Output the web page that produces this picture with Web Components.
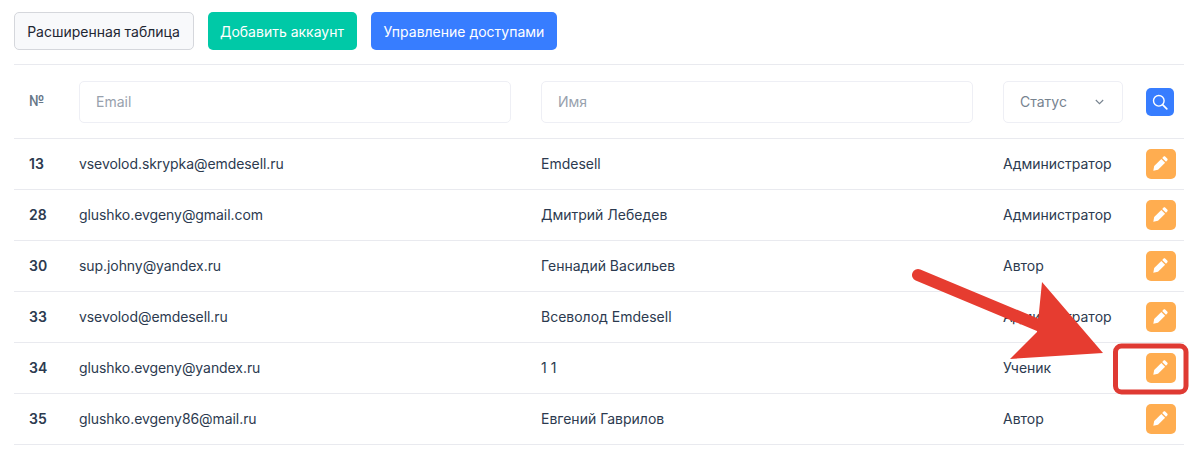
<!DOCTYPE html>
<html lang="ru">
<head>
<meta charset="utf-8">
<title>Аккаунты</title>
<style>
    html, body { margin: 0; background: #fff; }
    body { font-family: Inter, "Noto Sans", sans-serif; font-size: 14px; color: #2c3a4f; }
</style>
</head>
<body>
<accounts-page></accounts-page>

<script>
const ROWS = [
    ["13", "vsevolod.skrypka@emdesell.ru", "Emdesell", "Администратор"],
    ["28", "glushko.evgeny@gmail.com", "Дмитрий Лебедев", "Администратор"],
    ["30", "sup.johny@yandex.ru", "Геннадий Васильев", "Автор"],
    ["33", "vsevolod@emdesell.ru", "Всеволод Emdesell", "Администратор"],
    ["34", "glushko.evgeny@yandex.ru", "1 1", "Ученик"],
    ["35", "glushko.evgeny86@mail.ru", "Евгений Гаврилов", "Автор"]
];

class ToolButton extends HTMLElement {
    constructor() {
        super();
        this.shadow = this.attachShadow({mode:'open'});
        this.shadow.innerHTML = `
        <style>
            :host {
                display: inline-flex;
                align-items: center;
                justify-content: center;
                height: 38px;
                box-sizing: border-box;
                border-radius: 5px;
                font-size: 14px;
                font-weight: 400;
                white-space: nowrap;
                color: #fff;
                background: var(--bg);
            }
            :host([kind="light"]) {
                width: 180px;
                padding-right: 1px;
                color: #1f2733;
                background: #f8f9fb;
                border: 1px solid #d5d7dc;
            }
            :host([kind="green"]) { --bg: #00c9a7; width: 149px; padding-right: 1px; }
            :host([kind="blue"]) { --bg: #377dff; width: 186px; }
        </style>
        <slot></slot>
        `;
    }
}

class FilterInput extends HTMLElement {
    constructor() {
        super();
        this.shadow = this.attachShadow({mode:'open'});
        this.shadow.innerHTML = `
        <style>
            :host {
                display: flex;
                align-items: center;
                height: 42px;
                box-sizing: border-box;
                padding: 0 16px;
                border: 1px solid #eeeff5;
                border-radius: 5px;
                background: #fff;
                color: #98a1ad;
                font-size: 14px;
            }
        </style>
        <slot></slot>
        `;
    }
}

class StatusSelect extends HTMLElement {
    constructor() {
        super();
        this.shadow = this.attachShadow({mode:'open'});
        this.shadow.innerHTML = `
        <style>
            :host {
                display: flex;
                align-items: center;
                justify-content: space-between;
                width: 120px;
                height: 42px;
                box-sizing: border-box;
                padding: 0 18px 0 16px;
                border: 1px solid #eeeff5;
                border-radius: 5px;
                color: #77838f;
                font-size: 14px;
            }
            svg { display: block; }
        </style>
        <slot></slot>
        <svg width="9" height="6" viewBox="0 0 9 6" fill="none" stroke="#77838f" stroke-width="1.1"><path d="M.8 1l3.7 3.7L8.2 1"/></svg>
        `;
    }
}

class IconButton extends HTMLElement {
    connectedCallback() {
        if (this.shadowRoot) return;
        this.shadow = this.attachShadow({mode:'open'});
        const search = this.getAttribute("icon") === "search";
        this.shadow.innerHTML = `
        <style>
            :host {
                display: flex;
                align-items: center;
                justify-content: center;
                width: 30px;
                height: 30px;
                box-sizing: border-box;
                padding: 0 2px 2px 0;
                border-radius: 5px;
                background: #ffad50;
            }
            :host([icon="search"]) {
                width: 28px;
                height: 28px;
                padding: 0;
                background: #377dff;
            }
            svg { display: block; }
        </style>
        ${search
            ? `<svg width="16" height="16" viewBox="0 0 16 16" fill="none" stroke="#fff" stroke-width="1.4" stroke-linecap="round"><circle cx="6.8" cy="6.8" r="5.3"/><path d="M10.8 10.8l4 4" stroke-width="1.7"/></svg>`
            : `<svg width="15" height="15" viewBox="0 0 15 15" fill="#fff"><path d="M.3 14.7L1.2 10 8.3 2.9l3.8 3.8L5 13.8z"/><path d="M9.2 2l1.2-1.2c.6-.6 1.4-.6 2 0l1.8 1.8c.6.6.6 1.4 0 2L13 5.8z"/></svg>`}
        `;
    }
}

class AccountRow extends HTMLElement {
    connectedCallback() {
        if (this.shadowRoot) return;
        this.shadow = this.attachShadow({mode:'open'});
        this.shadow.innerHTML = `
        <style>
            :host {
                display: grid;
                grid-template-columns: 50px 462px 462px 143px 38px;
                align-items: center;
                height: 51px;
                box-sizing: border-box;
                padding: 0 0 0 15px;
                border-bottom: 1px solid #e9eaef;
                font-size: 14px;
                color: #2c3a4f;
            }
            .num { font-weight: 600; }
            .cell { padding-bottom: 2px; }
            .email { letter-spacing: -.07px; }
        </style>
        <div class="num cell">${this.getAttribute("num")}</div>
        <div class="cell email">${this.getAttribute("email")}</div>
        <div class="cell">${this.getAttribute("name")}</div>
        <div class="cell">${this.getAttribute("role")}</div>
        <icon-button></icon-button>
        `;
    }
}

class ArrowCallout extends HTMLElement {
    constructor() {
        super();
        this.shadow = this.attachShadow({mode:'open'});
        this.shadow.innerHTML = `
        <style>
            :host {
                position: absolute;
                left: 0;
                top: 0;
                pointer-events: none;
            }
            svg { display: block; }
        </style>
        <svg width="1199" height="458" viewBox="0 0 1199 458" fill="none">
            <path d="M918 275L1050 330" stroke="#e63c30" stroke-width="12" stroke-linecap="round"/>
            <path d="M1042 282L1103 353L1010 359L1037 332Z" fill="#e63c30"/>
            <rect x="1115.5" y="346" width="70.5" height="46" rx="6" stroke="#df3a33" stroke-width="5"/>
        </svg>
        `;
    }
}

class AccountsPage extends HTMLElement {
    constructor() {
        super();
        this.shadow = this.attachShadow({mode:'open'});
        this.shadow.innerHTML = `
        <style>
            :host {
                display: block;
                position: relative;
                width: 1199px;
                height: 458px;
                overflow: hidden;
                box-sizing: border-box;
                padding: 12px 15px 0 14px;
            }
            .toolbar {
                display: flex;
                gap: 14px;
                padding-bottom: 14px;
                border-bottom: 1px solid #e9eaef;
            }
            .filters {
                display: grid;
                grid-template-columns: 50px 432px 30px 432px 30px 120px 23px 28px;
                align-items: center;
                height: 74px;
                box-sizing: border-box;
                padding-left: 15px;
                border-bottom: 1px solid #e9eaef;
            }
            .no { font-weight: 600; color: #677788; font-size: 14px; margin-top: -2px; }
        </style>
        <div class="toolbar">
            <tool-button kind="light">Расширенная таблица</tool-button>
            <tool-button kind="green">Добавить аккаунт</tool-button>
            <tool-button kind="blue">Управление доступами</tool-button>
        </div>
        <div class="filters">
            <div class="no">№</div>
            <filter-input>Email</filter-input>
            <span></span>
            <filter-input>Имя</filter-input>
            <span></span>
            <status-select>Статус</status-select>
            <span></span>
            <icon-button icon="search"></icon-button>
        </div>
        <div id="rows"></div>
        <arrow-callout></arrow-callout>
        `;
        const rows = this.shadow.querySelector('#rows');
        ROWS.forEach(r => {
            const row = document.createElement('account-row');
            row.setAttribute("num", r[0]);
            row.setAttribute("email", r[1]);
            row.setAttribute("name", r[2]);
            row.setAttribute("role", r[3]);
            rows.appendChild(row);
        });
    }
}

customElements.define('tool-button', ToolButton);
customElements.define('filter-input', FilterInput);
customElements.define('status-select', StatusSelect);
customElements.define('icon-button', IconButton);
customElements.define('account-row', AccountRow);
customElements.define('arrow-callout', ArrowCallout);
customElements.define('accounts-page', AccountsPage);
</script>
</body>
</html>
